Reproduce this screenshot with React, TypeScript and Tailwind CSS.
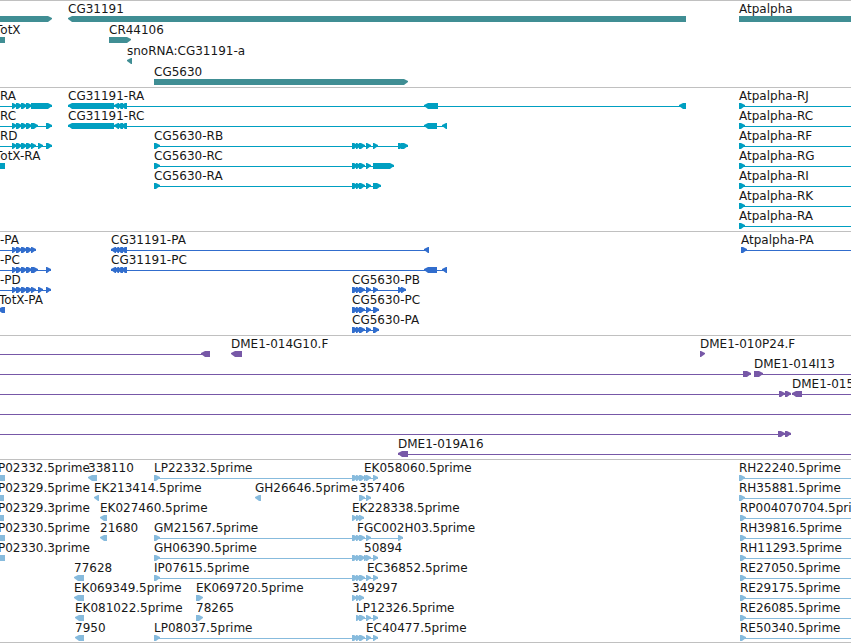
type Strand = 1 | -1;
type Span = [number, number];

interface Feature {
  label?: string;
  x?: number;
  line?: Span;
  parts?: Span[];
  strand?: Strand;
}

interface Track {
  id: string;
  color: string;
  rowClass: string;
  padClass: string;
  rows: Feature[][];
}

// Features that run past either edge of the view
const START = -40;
const END = 4000;

const GLYPH_TOP = 15;
const GLYPH_BOTTOM = 21;
const GLYPH_MID = 18;

// Exons shared by several transcripts
const LEFT: Span[] = [[12, 17], [16, 22], [21, 27], [26, 32]];
const CG31191: Span[] = [[114, 119], [117, 123], [121, 127]];
const CG5630: Span[] = [[352, 358], [356, 361], [359, 365], [366, 371]];

const atpalpha = (label: string, x = 739): Feature => ({ label, x, line: [x, END], parts: [[x, x + 6]], strand: 1 });
const clipped = (label: string, x: number, end = 5): Feature => ({ label, x, parts: [[START, end]], strand: -1 });
const est = (label: string, x: number, end: number, strand: Strand = -1): Feature => ({ label, x, parts: [[x, end]], strand });

const tracks: Track[] = [
  {
    id: 'gene',
    color: '#408e94',
    rowClass: 'h-[21px]',
    padClass: 'pb-0.5',
    rows: [
      [
        { parts: [[START, 52]], strand: 1 },
        { label: 'CG31191', x: 68, parts: [[68, 686]], strand: -1 },
        { label: 'Atpalpha', x: 739, parts: [[739, END]], strand: 1 },
      ],
      [clipped('TotX', -5), est('CR44106', 109, 131, 1)],
      [est('snoRNA:CG31191-a', 127, 132)],
      [est('CG5630', 154, 408, 1)],
    ],
  },
  {
    id: 'transcript',
    color: '#009fc1',
    rowClass: 'h-5',
    padClass: 'pb-[3px]',
    rows: [
      [
        { label: 'RA', x: 0, line: [START, 52], parts: [...LEFT, [31, 52]], strand: 1 },
        { label: 'CG31191-RA', x: 68, line: [68, 686], parts: [[68, 114], ...CG31191, [424, 438], [679, 686]], strand: -1 },
        atpalpha('Atpalpha-RJ'),
      ],
      [
        { label: 'RC', x: 0, line: [START, 52], parts: [...LEFT, [31, 38], [46, 52]], strand: 1 },
        { label: 'CG31191-RC', x: 68, line: [68, 447], parts: [[68, 114], ...CG31191, [424, 437], [442, 447]], strand: -1 },
        atpalpha('Atpalpha-RC'),
      ],
      [
        { label: 'RD', x: 0, line: [START, 52], parts: [...LEFT, [31, 36], [38, 43], [46, 52]], strand: 1 },
        { label: 'CG5630-RB', x: 154, line: [154, 408], parts: [[154, 160], ...CG5630, [373, 378], [398, 404], [401, 408]], strand: 1 },
        atpalpha('Atpalpha-RF'),
      ],
      [
        clipped('TotX-RA', -5),
        { label: 'CG5630-RC', x: 154, line: [154, 394], parts: [[154, 160], ...CG5630, [373, 394]], strand: 1 },
        atpalpha('Atpalpha-RG'),
      ],
      [
        { label: 'CG5630-RA', x: 154, line: [154, 381], parts: [[154, 160], ...CG5630, [373, 381]], strand: 1 },
        atpalpha('Atpalpha-RI'),
      ],
      [atpalpha('Atpalpha-RK')],
      [atpalpha('Atpalpha-RA')],
    ],
  },
  {
    id: 'cds',
    color: '#316dcd',
    rowClass: 'h-5',
    padClass: 'pb-[3px]',
    rows: [
      [
        { label: '-PA', x: 0, line: [START, 36], parts: [...LEFT, [31, 36]], strand: 1 },
        { label: 'CG31191-PA', x: 111, line: [111, 429], parts: [[111, 116], ...CG31191, [424, 429]], strand: -1 },
        atpalpha('Atpalpha-PA', 741),
      ],
      [
        { label: '-PC', x: 0, line: [START, 51], parts: [...LEFT, [31, 38], [46, 51]], strand: 1 },
        { label: 'CG31191-PC', x: 111, line: [111, 447], parts: [[111, 116], ...CG31191, [424, 437], [442, 447]], strand: -1 },
      ],
      [
        { label: '-PD', x: 0, line: [START, 51], parts: [...LEFT, [31, 36], [38, 43], [46, 51]], strand: 1 },
        { label: 'CG5630-PB', x: 352, line: [352, 406], parts: [...CG5630, [373, 378], [398, 403], [401, 406]], strand: 1 },
      ],
      [
        { label: 'TotX-PA', x: -1, parts: [[-2, 5]], strand: -1 },
        { label: 'CG5630-PC', x: 352, line: [352, 379], parts: [...CG5630, [373, 379]], strand: 1 },
      ],
      [{ label: 'CG5630-PA', x: 352, line: [352, 379], parts: [...CG5630, [373, 379]], strand: 1 }],
    ],
  },
  {
    id: 'clones',
    color: '#7758a7',
    rowClass: 'h-5',
    padClass: 'pb-[3px]',
    rows: [
      [
        { line: [START, 210], parts: [[201, 210]], strand: -1 },
        est('DME1-014G10.F', 231, 242),
        est('DME1-010P24.F', 700, 705, 1),
      ],
      [
        { line: [START, 751], parts: [[743, 751]], strand: 1 },
        { label: 'DME1-014I13', x: 754, line: [754, END], parts: [[754, 763]], strand: 1 },
      ],
      [
        { line: [START, 791], parts: [[779, 785], [785, 791]], strand: 1 },
        { label: 'DME1-015', x: 792, line: [792, END], parts: [[792, 802]], strand: -1 },
      ],
      [{ line: [START, END] }],
      [{ line: [START, 791], parts: [[778, 785], [785, 791]], strand: 1 }],
      [{ label: 'DME1-019A16', x: 398, line: [398, END], parts: [[398, 408]], strand: -1 }],
    ],
  },
  {
    id: 'est',
    color: '#87bbdd',
    rowClass: 'h-5',
    padClass: 'pb-0.5',
    rows: [
      [
        clipped('P02332.5prime', -2),
        est('338110', 88, 97),
        { label: 'LP22332.5prime', x: 154, line: [154, 378], parts: [[154, 160], ...CG5630, [373, 378]], strand: 1 },
        { label: 'EK058060.5prime', x: 364, parts: [[364, 369]], strand: 1 },
        atpalpha('RH22240.5prime'),
      ],
      [
        clipped('P02329.5prime', -2, 4),
        est('EK213414.5prime', 94, 99),
        est('GH26646.5prime', 255, 261),
        { label: '357406', x: 359, line: [359, 371], parts: [[359, 365], [366, 371]], strand: 1 },
        atpalpha('RH35881.5prime'),
      ],
      [
        clipped('P02329.3prime', -2, 4),
        est('EK027460.5prime', 100, 107),
        { label: 'EK228338.5prime', x: 352, line: [352, 364], parts: [[352, 357], [356, 361], [359, 364]], strand: 1 },
        atpalpha('RP004070704.5prime', 740),
      ],
      [
        clipped('P02330.5prime', -2),
        est('21680', 100, 107),
        { label: 'GM21567.5prime', x: 154, line: [154, 371], parts: [[154, 160], ...CG5630], strand: 1 },
        { label: 'FGC002H03.5prime', x: 357, line: [357, 403], parts: [[398, 403]], strand: 1 },
        atpalpha('RH39816.5prime', 740),
      ],
      [
        clipped('P02330.3prime', -2),
        { label: 'GH06390.5prime', x: 154, line: [154, 378], parts: [[154, 160], ...CG5630, [373, 378]], strand: 1 },
        { label: '50894', x: 364, parts: [[364, 369]], strand: 1 },
        atpalpha('RH11293.5prime', 740),
      ],
      [
        est('77628', 74, 84),
        { label: 'IP07615.5prime', x: 154, line: [154, 378], parts: [[154, 160], ...CG5630], strand: 1 },
        { label: 'EC36852.5prime', x: 367, parts: [[373, 378]], strand: 1 },
        atpalpha('RE27050.5prime', 740),
      ],
      [
        est('EK069349.5prime', 74, 84),
        est('EK069720.5prime', 196, 203, 1),
        { label: '349297', x: 352, line: [352, 364], parts: [[352, 357], [356, 361], [359, 364]], strand: 1 },
        atpalpha('RE29175.5prime', 740),
      ],
      [
        est('EK081022.5prime', 75, 84),
        est('78265', 196, 203, 1),
        { label: 'LP12326.5prime', x: 356, line: [356, 378], parts: [[356, 361], [359, 365], [366, 371], [373, 378]], strand: 1 },
        atpalpha('RE26085.5prime', 740),
      ],
      [
        est('7950', 75, 84),
        { label: 'LP08037.5prime', x: 154, line: [154, 378], parts: [[154, 160], ...CG5630], strand: 1 },
        { label: 'EC40477.5prime', x: 366, parts: [[373, 378]], strand: 1 },
        atpalpha('RE50340.5prime', 740),
      ],
    ],
  },
];

// Block with a pointed end on the side of its strand
function arrowPoints([a, b]: Span, strand: Strand) {
  const tip = strand === 1 ? b : a;
  const tail = strand === 1 ? a : b;
  const neck = tip - strand * Math.min(4, b - a);
  return `${tail},${GLYPH_TOP} ${neck},${GLYPH_TOP} ${tip},${GLYPH_MID - 1} ${tip},${GLYPH_MID} ${neck},${GLYPH_BOTTOM} ${tail},${GLYPH_BOTTOM}`;
}

function FeatureGlyph({ feature, color }: { feature: Feature; color: string }) {
  const { label, x, line, parts = [], strand = 1 } = feature;
  return (
    <g>
      {line && <rect x={line[0]} y={GLYPH_MID} width={line[1] - line[0]} height={1} fill={color} />}
      {parts.map((part, i) => (
        <polygon key={i} points={arrowPoints(part, strand)} fill={color} />
      ))}
      {label && (
        <text x={x} y={12} className="fill-neutral-900">
          {label}
        </text>
      )}
    </g>
  );
}

function TrackView({ track }: { track: Track }) {
  return (
    <section className={`border-t border-[#c0c0c0] ${track.padClass}`}>
      {track.rows.map((row, i) => (
        <div key={i} className={track.rowClass}>
          <svg className="block h-full w-full overflow-visible">
            {row.map((feature, j) => (
              <FeatureGlyph key={j} feature={feature} color={track.color} />
            ))}
          </svg>
        </div>
      ))}
    </section>
  );
}

export default function App() {
  return (
    <main className="w-full overflow-hidden border-b border-[#c0c0c0] bg-white text-[12px] font-['DejaVu_Sans',sans-serif]">
      {tracks.map((track) => (
        <TrackView key={track.id} track={track} />
      ))}
    </main>
  );
}
